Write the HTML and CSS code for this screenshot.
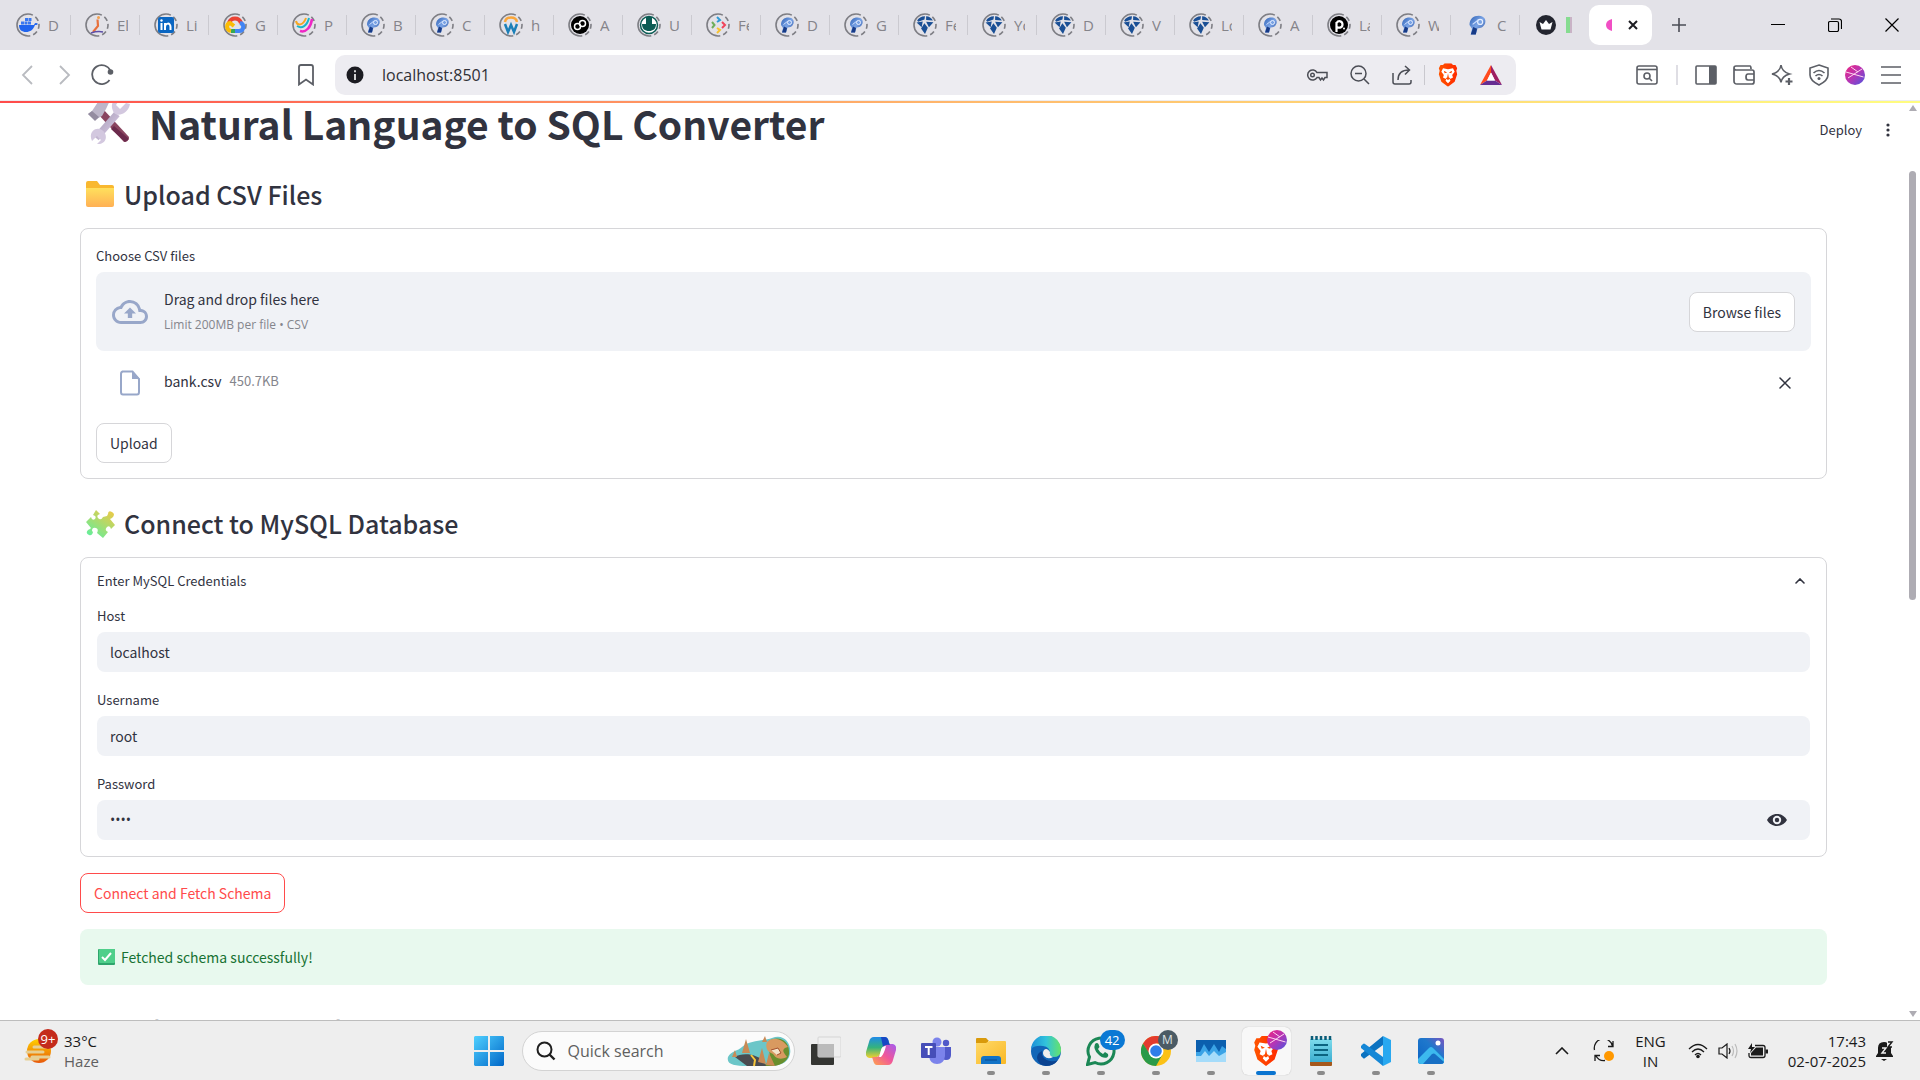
FILE: index.html
```html
<!DOCTYPE html>
<html lang="en">
<head>
<meta charset="utf-8">
<meta name="viewport" content="width=device-width, initial-scale=1">
<title>Natural Language to SQL Converter</title>
<link rel="stylesheet" href="styles.css">
</head>
<body>
<svg class="sprite" aria-hidden="true">
  <defs>
    <linearGradient id="gBlue" x1="0" y1="0" x2="1" y2="1"><stop offset="0" stop-color="#2f62b5"/><stop offset=".5" stop-color="#7ba4e6"/><stop offset="1" stop-color="#2a4f9a"/></linearGradient>
    <linearGradient id="gOrb" x1="0" y1="0" x2="1" y2="1"><stop offset="0" stop-color="#f0257f"/><stop offset=".5" stop-color="#b535b5"/><stop offset="1" stop-color="#4b55e0"/></linearGradient>
    <linearGradient id="gBrave" x1="0" y1="0" x2="1" y2="0"><stop offset="0" stop-color="#ff5500"/><stop offset="1" stop-color="#ff2a00"/></linearGradient>
    <linearGradient id="gWin" x1="0" y1="0" x2="1" y2="1"><stop offset="0" stop-color="#4fd0ff"/><stop offset="1" stop-color="#0067c8"/></linearGradient>
    <linearGradient id="gFolder" x1="0" y1="0" x2="0" y2="1"><stop offset="0" stop-color="#ffe05c"/><stop offset="1" stop-color="#ffb055"/></linearGradient>
    <linearGradient id="gFolder2" x1="0" y1="0" x2="1" y2="1"><stop offset="0" stop-color="#ffd968"/><stop offset="1" stop-color="#f9b825"/></linearGradient>
    <linearGradient id="gPuzzle" gradientUnits="userSpaceOnUse" x1="6" y1="30" x2="24" y2="4"><stop offset="0" stop-color="#62ef9c"/><stop offset="1" stop-color="#e3cc4c"/></linearGradient>
    <linearGradient id="gSun" x1="0" y1="0" x2="0" y2="1"><stop offset="0" stop-color="#ffd100"/><stop offset="1" stop-color="#e8590c"/></linearGradient>
    <linearGradient id="gEdge" x1="0" y1="0" x2="1" y2="0"><stop offset="0" stop-color="#1c8fd8"/><stop offset=".5" stop-color="#31c3dc"/><stop offset="1" stop-color="#66e36a"/></linearGradient>
    <linearGradient id="gCopA" x1="0" y1="0" x2="0" y2="1"><stop offset="0" stop-color="#1f8ae8"/><stop offset=".5" stop-color="#35b37c"/><stop offset="1" stop-color="#f5d12d"/></linearGradient>
    <linearGradient id="gCopB" x1="1" y1="0" x2="0" y2="1"><stop offset="0" stop-color="#a35cf0"/><stop offset=".5" stop-color="#f0569a"/><stop offset="1" stop-color="#ffa54a"/></linearGradient>
    <linearGradient id="gPhoto" x1="0" y1="1" x2="1" y2="0"><stop offset="0" stop-color="#0b63c4"/><stop offset=".6" stop-color="#1f78cc"/><stop offset="1" stop-color="#7a55c0"/></linearGradient>
    <linearGradient id="gNote" x1="0" y1="0" x2="0" y2="1"><stop offset="0" stop-color="#7edcec"/><stop offset="1" stop-color="#3cadd0"/></linearGradient>
    <linearGradient id="gMetal" x1="0" y1="0" x2="1" y2="1"><stop offset="0" stop-color="#a59db3"/><stop offset="1" stop-color="#dccbea"/></linearGradient>
  </defs>
  <symbol id="ring" viewBox="0 0 24 24"><path d="M12 1A11 11 0 0 0 12 23" fill="none" stroke="#7e7e84" stroke-width="1.6"/><path d="M12 1A11 11 0 0 1 12 23" fill="none" stroke="#7e7e84" stroke-width="1.6" stroke-dasharray="5 3"/></symbol>
  <symbol id="p-bird" viewBox="0 0 16 16"><path d="M3 15.500 4 11 2 8C2 3 5 .500 9.500.500c4 0 6 3 5 6S11 10.500 8.500 10.500L7 15.500Z" fill="url(#gBlue)"/><path d="M3 15.500 5 9.500 8 11 7 15.500Z" fill="#173b87"/><circle cx="10.500" cy="5.500" r="2" fill="none" stroke="#e6efff"/><path d="M4.500 7.500 9 4" stroke="#cfe0ff"/></symbol>
  <symbol id="shards" viewBox="0 0 16 16"><path d="M1 4Q3 .500 8 .300L7.500 3 2 5ZM9 .300Q13 .500 15 4L9 3.500ZM.500 5.800 6 4.800 5 10ZM9 5 15.500 5.500 11.500 10ZM7.500 6.500 10.500 10.500 8 16 4.500 11Z" fill="#1a4f95"/></symbol>
  <symbol id="brave" viewBox="0 0 24 28"><path d="M6 2 8 0h8l2 2 3 0 2 4-1 3 1 4-3 9-8 6-8-6-3-9 1-4-1-3 2-4Z" fill="url(#gBrave)"/><path d="m6 6 6 1 6-1 2 4-3 4 1 3-4 2 1 2-3 3-3-3 1-2-4-2 1-3-3-4Z" fill="#fff"/><path d="m7 9 4 2-3 1Zm10 0-4 2 3 1Zm-5 3 1 5 2 1-3 2-3-2 2-1Z" fill="#ff4a00"/></symbol>
  <symbol id="orb" viewBox="0 0 20 20"><circle cx="10" cy="10" r="10" fill="url(#gOrb)"/><path d="M1 7 18.500 12M3 13 17 4M6 2 13 7" stroke="#ffd5ef" stroke-width="1" fill="none"/></symbol>
  <symbol id="folder" viewBox="0 0 30 28"><path d="M1 3q0-2 2-2h9l3 4h12q2 0 2 2v9H1Z" fill="#f9b82f"/><path d="M1 8h28v17q0 2-2 2H3q-2 0-2-2Z" fill="url(#gFolder)"/></symbol>
</svg>

<div class="screen">
  <header class="browser">
    <div class="tabstrip">
      <nav class="tabs" aria-label="Tabs">
        <a class="tab" href="#"><svg class="fav" viewBox="0 0 24 24"><use href="#ring"/><path d="M3 12h15c1-3 3-2 4-1-1 1-2 1-3 1-2 5-5 7-9 7-4 0-7-2-7-7Z" fill="#2064ee"/><path d="M5 8.500h3v3H5Zm3.500 0h3v3h-3Zm3.500 0h3v3h-3Zm-3-3.500h3v3h-3Zm3.500 0h3v3h-3Z" fill="#3a78f0"/></svg><span>D</span></a>
        <a class="tab" href="#"><svg class="fav" viewBox="0 0 24 24"><use href="#ring"/><path d="M12.500 6.500 13 13l-5 6" stroke="#e8703c" stroke-width="2.200" fill="none"/><path d="M6 20c3-1 7-2 12-1" stroke="#5d4fa8" stroke-width="1.500" fill="none"/><circle cx="13.500" cy="4.500" r="1.500" fill="#f3a04d"/></svg><span>El</span></a>
        <a class="tab" href="#"><svg class="fav" viewBox="0 0 24 24"><use href="#ring"/><rect x="4" y="4" width="16" height="16" rx="2" fill="#0a66c2"/><path d="M7.500 10v7M11 17v-7m0 4c0-4 5.500-5 5.500 0v3" stroke="#fff" stroke-width="2" fill="none"/><circle cx="7.500" cy="7.500" r="1.200" fill="#fff"/></svg><span>Li</span></a>
        <a class="tab" href="#"><svg class="fav" viewBox="0 0 24 24"><use href="#ring"/><path d="M6 10c2-6 10-6 12 0" stroke="#ea4335" stroke-width="4" fill="none"/><path d="M17 10c5 1 4 8-1 8h-4" stroke="#4285f4" stroke-width="4" fill="none"/><path d="M12 18H8" stroke="#34a853" stroke-width="4"/><path d="M8 18c-5-1-5-7-1-8l4 3" stroke="#fbbc05" stroke-width="4" fill="none"/></svg><span>G</span></a>
        <a class="tab" href="#"><svg class="fav" viewBox="0 0 24 24"><use href="#ring"/><path d="M4 8c1 5 7 5 10-3" stroke="#f5a623" stroke-width="2" fill="none"/><path d="M5 13c5 3 10 0 12-8" stroke="#19b5c9" stroke-width="2" fill="none"/><path d="M8 18c6 2 11-4 12-12" stroke="#ef27c5" stroke-width="2.500" fill="none"/></svg><span>P</span></a>
        <a class="tab" href="#"><svg class="fav" viewBox="0 0 24 24"><use href="#ring"/><use href="#p-bird" x="4" y="4" width="16" height="16"/></svg><span>B</span></a>
        <a class="tab" href="#"><svg class="fav" viewBox="0 0 24 24"><use href="#ring"/><use href="#p-bird" x="4" y="4" width="16" height="16"/></svg><span>C</span></a>
        <a class="tab" href="#"><svg class="fav" viewBox="0 0 24 24"><use href="#ring"/><path d="M6 9c1-6 11-6 12 0" stroke="#f9a63a" stroke-width="2.500" fill="none"/><path d="m6 11 3 8 3-7 3 7 3-8" stroke="#1b7fb8" stroke-width="2.500" fill="none"/></svg><span>h</span></a>
        <a class="tab" href="#"><svg class="fav" viewBox="0 0 24 24"><use href="#ring"/><circle cx="12" cy="12" r="9" fill="#000"/><circle cx="9.500" cy="13.500" r="3" fill="none" stroke="#fff" stroke-width="1.500"/><circle cx="14.500" cy="10.500" r="3" fill="none" stroke="#fff" stroke-width="1.500"/></svg><span>A</span></a>
        <a class="tab" href="#"><svg class="fav" viewBox="0 0 24 24"><use href="#ring"/><circle cx="12" cy="12" r="8.500" fill="#fff" stroke="#0b5c54" stroke-width="1.500"/><path d="M9 4h6v7h4c0 5-3 7-7 7s-7-2-7-7h4Z" fill="#0b5c54"/></svg><span>U</span></a>
        <a class="tab" href="#"><svg class="fav" viewBox="0 0 24 24"><use href="#ring"/><path d="m6 9 2.500 3L6 15" stroke="#6fae5a" stroke-width="2" fill="none"/><path d="m11 4 3 3-3 2" stroke="#2f9bd6" stroke-width="2" fill="none"/><path d="m16 9 3 3-3 3" stroke="#f0445a" stroke-width="2" fill="none"/><path d="m11 15 3 2-3 3" stroke="#f7c22f" stroke-width="2" fill="none"/></svg><span>Fe</span></a>
        <a class="tab" href="#"><svg class="fav" viewBox="0 0 24 24"><use href="#ring"/><use href="#p-bird" x="4" y="4" width="16" height="16"/></svg><span>D</span></a>
        <a class="tab" href="#"><svg class="fav" viewBox="0 0 24 24"><use href="#ring"/><use href="#p-bird" x="4" y="4" width="16" height="16"/></svg><span>G</span></a>
        <a class="tab" href="#"><svg class="fav" viewBox="0 0 24 24"><use href="#ring"/><use href="#shards" x="3" y="3" width="18" height="18"/></svg><span>Fe</span></a>
        <a class="tab" href="#"><svg class="fav" viewBox="0 0 24 24"><use href="#ring"/><use href="#shards" x="3" y="3" width="18" height="18"/></svg><span>Yo</span></a>
        <a class="tab" href="#"><svg class="fav" viewBox="0 0 24 24"><use href="#ring"/><use href="#shards" x="3" y="3" width="18" height="18"/></svg><span>D</span></a>
        <a class="tab" href="#"><svg class="fav" viewBox="0 0 24 24"><use href="#ring"/><use href="#shards" x="3" y="3" width="18" height="18"/></svg><span>V</span></a>
        <a class="tab" href="#"><svg class="fav" viewBox="0 0 24 24"><use href="#ring"/><use href="#shards" x="3" y="3" width="18" height="18"/></svg><span>Lo</span></a>
        <a class="tab" href="#"><svg class="fav" viewBox="0 0 24 24"><use href="#ring"/><use href="#p-bird" x="4" y="4" width="16" height="16"/></svg><span>A</span></a>
        <a class="tab" href="#"><svg class="fav" viewBox="0 0 24 24"><use href="#ring"/><circle cx="12" cy="12" r="9" fill="#000"/><path d="M9.500 19V9M9.500 10c2-3 6-2 6 1.500s-4 4-6 2" stroke="#fff" stroke-width="2.200" fill="none"/><circle cx="17" cy="15.500" r="1" fill="#fff"/></svg><span>La</span></a>
        <a class="tab" href="#"><svg class="fav" viewBox="0 0 24 24"><use href="#ring"/><use href="#p-bird" x="4" y="4" width="16" height="16"/></svg><span>W</span></a>
        <a class="tab" href="#"><svg class="fav" viewBox="0 0 24 24"><use href="#p-bird" x="2" y="2" width="20" height="20"/></svg><span>C</span></a>
        <a class="tab last" href="#"><svg class="fav" viewBox="0 0 24 24"><circle cx="12" cy="12" r="10" fill="#23252f"/><path d="m5.500 9 3.500 2 3-4 3 4 3.500-2-2 7.500h-9Z" fill="#fff"/></svg><span class="chip"></span></a>
        <a class="tab active" href="#" aria-current="page"><svg width="8" height="12" viewBox="0 0 8 12"><path d="M7 0C3 1 1 3 1 6s2 5 6 6Z" fill="#f14fc4"/></svg><svg width="12" height="12" viewBox="0 0 12 12"><path d="m2 2 8 8M10 2l-8 8" stroke="#1d1d22" stroke-width="2"/></svg></a>
      </nav>
      <button class="bare newtab" aria-label="New tab"><svg width="14" height="14" viewBox="0 0 14 14"><path d="M7 0v14M0 7h14" stroke="#4b4d55" stroke-width="1.600"/></svg></button>
      <div class="winctl">
        <button class="bare" aria-label="Minimise"><svg width="14" height="14" viewBox="0 0 14 14"><path d="M0 6.500h14" stroke="#000"/></svg></button>
        <button class="bare" aria-label="Restore"><svg width="14" height="14" viewBox="0 0 14 14"><rect x=".500" y="3.500" width="10" height="10" rx="1.500" fill="none" stroke="#000" stroke-width="1.200"/><path d="M3 1h8q2.500 0 2.500 2.500V11" fill="none" stroke="#000" stroke-width="1.200"/></svg></button>
        <button class="bare" aria-label="Close"><svg width="14" height="14" viewBox="0 0 14 14"><path d="m.500.500 13 13m0-13-13 13" stroke="#000" stroke-width="1.200"/></svg></button>
      </div>
    </div>

    <div class="toolbar">
      <div class="nav">
        <button class="bare" aria-label="Back"><svg width="12" height="20" viewBox="0 0 12 20"><path d="M11 1 2 10l9 9" fill="none" stroke="#b9bbc0" stroke-width="1.800"/></svg></button>
        <button class="bare" aria-label="Forward"><svg width="12" height="20" viewBox="0 0 12 20"><path d="m1 1 9 9-9 9" fill="none" stroke="#b9bbc0" stroke-width="1.800"/></svg></button>
        <button class="bare" aria-label="Reload"><svg width="24" height="22" viewBox="0 0 24 22"><path d="M18.500 16A9.500 9.500 0 1 1 19.500 7" fill="none" stroke="#5c5f66" stroke-width="1.800"/><circle cx="19.500" cy="8" r="2.800" fill="#5c5f66"/></svg></button>
      </div>
      <button class="bare bookmark" aria-label="Bookmark"><svg width="18" height="22" viewBox="0 0 18 22"><path d="M2 20.500V3q0-2 2-2h10q2 0 2 2v17.500l-7-5Z" fill="none" stroke="#5c5f66" stroke-width="1.800"/></svg></button>
      <div class="address">
        <svg width="18" height="18" viewBox="0 0 18 18"><circle cx="9" cy="9" r="8.500" fill="#1c1c22"/><path d="M9 8v6M9 4.200v2" stroke="#fff" stroke-width="1.600"/></svg>
        <input class="url" type="text" value="localhost:8501" aria-label="Address">
        <button class="bare" aria-label="Passwords"><svg width="22" height="16" viewBox="0 0 22 16"><path d="M11 5.500A5 5 0 1 0 11 10.500h2l1.500 2.500 1.500-2 1.500 2 1.500-2.500H21v-5Z" fill="none" stroke="#4b4d55" stroke-width="1.500"/><circle cx="6.500" cy="8" r="1.800" fill="none" stroke="#4b4d55" stroke-width="1.400"/></svg></button>
        <button class="bare" aria-label="Zoom"><svg width="20" height="20" viewBox="0 0 20 20"><circle cx="8.500" cy="8.500" r="7.500" fill="none" stroke="#4b4d55" stroke-width="1.500"/><path d="m14 14 5 5M5 8.500h7" stroke="#4b4d55" stroke-width="1.500"/></svg></button>
        <button class="bare" aria-label="Share"><svg width="20" height="20" viewBox="0 0 20 20"><path d="M1 8v9q0 2 2 2h14q2 0 2-2v-2M6 15C6 8 10 5 17 5M13 1l4.500 4-4.500 4.500" fill="none" stroke="#4b4d55" stroke-width="1.500"/></svg></button>
        <span class="rule"></span>
        <button class="bare" aria-label="Shields"><svg width="20" height="24" viewBox="0 0 24 28"><use href="#brave"/></svg></button>
        <button class="bare" aria-label="Rewards"><svg width="22" height="20" viewBox="0 0 22 20"><path d="M11 0 0 20l7-4.500 4-8Z" fill="#ff4a1e"/><path d="m11 0 11 20-7-4.500-4-8Z" fill="#9e1f63"/><path d="M0 20h22l-7-4.500H7Z" fill="#662d91"/><path d="m11 7.500 4 8H7Z" fill="#fff"/></svg></button>
      </div>
      <div class="tools">
        <button class="bare" aria-label="Search tabs"><svg width="22" height="20" viewBox="0 0 22 20"><rect x="1" y="1" width="20" height="18" rx="2" fill="none" stroke="#5c5f66" stroke-width="1.600"/><path d="M1 4.500h20" stroke="#5c5f66" stroke-width="1.600"/><circle cx="11" cy="11" r="3" fill="none" stroke="#5c5f66" stroke-width="1.600"/><path d="m13 13 3 3" stroke="#5c5f66" stroke-width="1.600"/></svg></button>
        <span class="rule thick"></span>
        <button class="bare" aria-label="Sidebar"><svg width="22" height="20" viewBox="0 0 22 20"><rect x="1" y="1" width="20" height="18" rx="1" fill="none" stroke="#5c5f66" stroke-width="1.600"/><path d="M14 1h7v18h-7Z" fill="#5c5f66"/></svg></button>
        <button class="bare" aria-label="Wallet"><svg width="22" height="20" viewBox="0 0 22 20"><path d="M1 3q0-2 2-2h14q1 0 1 3M1 3q0 2 2 2h16q2 0 2 2v10q0 2-2 2H4q-3 0-3-3ZM21 9h-6q-2 0-2 3t2 3h6" fill="none" stroke="#5c5f66" stroke-width="1.700"/></svg></button>
        <button class="bare" aria-label="Assistant"><svg width="22" height="22" viewBox="0 0 22 22"><path d="M10 1q1 7 8.500 9-7.500 2-8.500 8.500Q9 12 1 10 9 8 10 1Z" fill="none" stroke="#5c5f66" stroke-width="1.600"/><path d="M18 14v7m-3.500-3.500h7" stroke="#5c5f66" stroke-width="2.200"/></svg></button>
        <button class="bare" aria-label="VPN"><svg width="20" height="22" viewBox="0 0 20 22"><path d="m10 1 9 3v7c0 5-5 8-9 10-4-2-9-5-9-10V4Z" fill="none" stroke="#5c5f66" stroke-width="1.600"/><path d="M4.500 9q5.500-5 11 0M6.500 12q3.500-3 7 0" fill="none" stroke="#5c5f66" stroke-width="1.600"/><circle cx="10" cy="14.500" r="1.500" fill="#5c5f66"/></svg></button>
        <button class="bare" aria-label="Profile"><svg width="20" height="20"><use href="#orb"/></svg></button>
        <button class="bare" aria-label="Menu"><svg width="20" height="18" viewBox="0 0 20 18"><path d="M0 1h20M0 9h20M0 17h20" stroke="#5c5f66" stroke-width="1.600"/></svg></button>
      </div>
    </div>
    <div class="rainbow"></div>
  </header>

  <div class="viewport">
    <main class="app">
      <h1><svg width="52" height="48" viewBox="0 0 52 48"><path d="m14 14 6-4 26 28q0 5-5 5Z" fill="#8a4560"/><path d="m31 27 15 13-4 3-14-13Z" fill="#6b2a4c"/><path d="m5 15 4-3 8-12 12-3-6 13-4 7-7 4Z" fill="#bdb6c9"/><path d="m5 15 4-3 7 6-4 4Z" fill="#948ca0"/><path d="m13 39 21-24" stroke="url(#gMetal)" stroke-width="7"/><path d="M43 4 37 10l-4-4 4-6c-7 0-10 5-7 12 2 7 15 4 17-7ZM9 42l5-5 4 4-4 4c9 1 12-9 5-14-7-4-14 3-10 11Z" fill="#d3c8df"/></svg>Natural Language to SQL Converter</h1>

      <h2><svg width="32" height="28" viewBox="0 0 30 28"><use href="#folder"/></svg>Upload CSV Files</h2>
      <form class="card">
        <label class="label" for="browse">Choose CSV files</label>
        <div class="drop">
          <svg width="36" height="36" viewBox="0 0 24 24" fill="#98a7c9"><path d="M19.350 10.040A7.490 7.490 0 0 0 12 4C9.110 4 6.600 5.640 5.350 8.040A5.994 5.994 0 0 0 0 14c0 3.310 2.690 6 6 6h13c2.760 0 5-2.240 5-5 0-2.640-2.050-4.780-4.650-4.960ZM19 18H6c-2.210 0-4-1.790-4-4 0-2.050 1.530-3.760 3.560-3.970l1.070-.110.500-.950A5.469 5.469 0 0 1 12 6c2.620 0 4.880 1.860 5.390 4.430l.300 1.500 1.530.110A2.980 2.980 0 0 1 22 15c0 1.650-1.350 3-3 3Z"/><path d="M8 13h2.550v3h2.900v-3H16l-4-4Z"/></svg>
          <div class="hint"><span>Drag and drop files here</span><small>Limit 200MB per file • CSV</small></div>
          <button class="btn" type="button" id="browse">Browse files</button>
        </div>
        <div class="file">
          <svg width="36" height="26" viewBox="0 0 36 26"><path d="M10 1.500h10.500L27 9v13q0 2.500-2 2.500H11q-2 0-2-2.500V4q0-2.500 2-2.500Z" fill="none" stroke="#98a7c9" stroke-width="2"/><path d="M20 1v8h8Z" fill="#98a7c9"/></svg>
          <span class="name">bank.csv</span><small>450.7KB</small>
          <button class="bare" type="button" aria-label="Remove bank.csv"><svg width="12" height="12" viewBox="0 0 12 12"><path d="m1 1 10 10M11 1 1 11" stroke="#31333f" stroke-width="1.500" stroke-linecap="round"/></svg></button>
        </div>
        <button class="btn" type="button">Upload</button>
      </form>

      <h2><svg width="32" height="32" viewBox="0 0 32 32"><g fill="url(#gPuzzle)"><path d="M12 3 16 7q-4 1-2 4 3 3 5-1l4-1 1-2q0-4 4-2t0 6l-2 1 5 6-4 4q-1-4-4-2-3 3 1 5l-5 6-6-5q2-4-1-5-4-1-4 3l1 1q-1 4-4 3-4-2-1-5l2-1 1-1-5-6 5-5q1 4 4 2 2-3-2-4Z"/></g></svg>Connect to MySQL Database</h2>
      <details class="card" open>
        <summary>Enter MySQL Credentials<svg width="10" height="6" viewBox="0 0 10 6"><path d="m1 5 4-4 4 4" fill="none" stroke="#31333f" stroke-width="1.600" stroke-linecap="round"/></svg></summary>
        <div class="fields">
          <div><label class="label" for="host">Host</label><input class="box" id="host" type="text" value="localhost"></div>
          <div><label class="label" for="user">Username</label><input class="box" id="user" type="text" value="root"></div>
          <div><label class="label" for="pass">Password</label>
            <div class="box secret"><input id="pass" type="password" value="root"><button class="bare" type="button" aria-label="Show password"><svg width="20" height="14" viewBox="0 0 20 14"><path d="M10 1C5.500 1 2 3.500 0 7c2 3.500 5.500 6 10 6s8-2.500 10-6c-2-3.500-5.500-6-10-6Z" fill="#31333f"/><circle cx="10" cy="7" r="3.200" fill="none" stroke="#f0f2f6" stroke-width="2"/></svg></button></div>
          </div>
        </div>
      </details>
      <button class="btn primary" type="button">Connect and Fetch Schema</button>
      <div class="alert" role="status"><svg width="17" height="16" viewBox="0 0 17 16"><rect width="17" height="16" rx="1" fill="#2fa56c"/><rect x="1" width="16" height="14" rx="1" fill="#4fcf8a"/><path d="m4 8 3 3 6-7" fill="none" stroke="#fff" stroke-width="2"/></svg>Fetched schema successfully!</div>
      <h2><svg width="32" height="20" viewBox="0 0 32 20"><path d="M3 3q0-2 2-2h9l3 3h11q2 0 2 2v12H3Z" fill="#f9b82f"/><path d="M6 10h25l-3 10H3Z" fill="url(#gFolder)"/></svg>Select MySQL Table</h2>
    </main>
    <div class="appbar"><button class="bare">Deploy</button><button class="bare" aria-label="More options"><svg width="4" height="14" viewBox="0 0 4 14" fill="#31333f"><circle cx="2" cy="2" r="1.600"/><circle cx="2" cy="7" r="1.600"/><circle cx="2" cy="12" r="1.600"/></svg></button></div>
    <div class="scroll" aria-hidden="true">
      <svg width="8" height="6" viewBox="0 0 8 6"><path d="M4 0 8 6H0Z" fill="#aeacb3"/></svg>
      <div class="track"><div class="thumb"></div></div>
      <svg width="8" height="6" viewBox="0 0 8 6"><path d="M4 6 8 0H0Z" fill="#aeacb3"/></svg>
    </div>
  </div>

  <footer class="taskbar">
    <div class="weather">
      <div class="app-ic"><svg width="28" height="28" viewBox="0 0 28 28"><circle cx="15" cy="14" r="12" fill="url(#gSun)"/><path d="M3 15h16M8 20h17M2 22h12M10 10h12" stroke="#e6cf94" stroke-width="3" stroke-linecap="round"/></svg><span class="badge red">9+</span></div>
      <div class="lines"><span>33°C</span><span class="dim">Haze</span></div>
    </div>
    <nav class="dock" aria-label="Taskbar">
      <button class="item" aria-label="Start"><svg width="30" height="30" viewBox="0 0 30 30"><path d="M1 0h13v14H0V1Zm15 0h13l1 1v13H16ZM0 16h14v14H1l-1-1Zm16 0h14v13l-1 1H16Z" fill="url(#gWin)"/></svg></button>
      <label class="search"><svg width="20" height="20" viewBox="0 0 20 20"><circle cx="8.500" cy="8.500" r="7" fill="none" stroke="#1f1f1f" stroke-width="2"/><path d="m13.500 13.500 5 5" stroke="#1f1f1f" stroke-width="2.400"/></svg><input type="text" placeholder="Quick search" aria-label="Quick search"><svg class="art" width="64" height="32" viewBox="0 0 64 32"><path d="M1 22c3-6 10-6 14-10 8-7 22-6 30-9 12-5 20 6 18 16-2 10-12 12-22 12H20C8 31-1 30 1 22Z" fill="#6cc6c8"/><path d="M42 6c10-6 20 0 20 10 1 9-7 14-15 15H36c12-6 4-15 6-25Z" fill="#6a8f2d"/><path d="M40 7c8-7 17-1 21 5-8 2-4 6-1 10-8 4-12 0-14-3-6-2-8-7-6-12Z" fill="#d99a60"/><path d="M8 22c7-5 26-4 31 9H20Z" fill="#4a4b50"/><path d="m24 20 4 5-1 6" fill="none" stroke="#f6c53a" stroke-width="2"/><path d="m15 18 4-14 4 14ZM31 27l4-14 4 16ZM39 30l3-12 6 13ZM5 22l3-7 2 7ZM35 7l3-6 2 6Z" fill="#c98a55"/><path d="m44 15 7-2 3 5-4 2" fill="#f4e3c8" stroke="#a5502c"/></svg></label>
      <button class="item" aria-label="Task view"><svg width="30" height="30" viewBox="0 0 30 30"><rect x="0" y="8" width="23" height="21" rx="1" fill="#343532"/><rect x="7" y="1" width="23" height="20" rx="1" fill="#eee" fill-opacity=".850" stroke="#d5d5d5"/><path d="M7 8h16v13H7Z" fill="#bbb"/></svg></button>
      <button class="item" aria-label="Copilot"><svg width="30" height="28" viewBox="0 0 30 28"><path d="M8 0h11q3 0 4 5l1 4h-4q-4 0-5 5-1 7-8 7H3q-4-1-3-6L3 5q1-5 5-5Z" fill="url(#gCopA)"/><path d="M22 28H11q-3 0-4-5l-1-3h4q4 0 5-6 2-7 8-7h4q4 1 3 6l-3 10q-1 5-5 5Z" fill="url(#gCopB)"/><path d="M15 0h4q3 0 4 6l1 2q-5-1-7 2Z" fill="#1748c4"/><path d="M15 20q3-3 5-11-4 0-5 4l-2 7Z" fill="#fff"/></svg></button>
      <button class="item" aria-label="Teams"><svg width="30" height="28" viewBox="0 0 30 28"><circle cx="16" cy="5" r="4.500" fill="#7b83eb"/><circle cx="25" cy="6" r="3.200" fill="#5059c9"/><path d="M19 10h11v8q0 5-5 5-4 0-6-3Z" fill="#5059c9"/><path d="M8 10h16v9q-1 8-8 8t-8-8Z" fill="#7b83eb"/><rect y="6" width="15" height="15" rx="1" fill="#464eb8"/><path d="M4 10h7.500M7.700 10v8" stroke="#fff" stroke-width="2"/></svg></button>
      <button class="item run" aria-label="File Explorer"><svg width="30" height="28" viewBox="0 0 30 28"><path d="M0 2q0-1 1-1h9l3 3h-1v3H0Z" fill="#d99a0b"/><path d="M0 6h10l3-2h16q1 0 1 1v21q0 1-1 1H0Z" fill="url(#gFolder2)"/><path d="M5 27v-5q0-3 3-3h14q3 0 3 3v5Z" fill="#1173c7"/><path d="M9 23h12" stroke="#0a4a8c"/></svg></button>
      <button class="item run" aria-label="Edge"><svg width="30" height="30" viewBox="0 0 30 30"><circle cx="15" cy="15" r="15" fill="#1166b8"/><path d="M0 13A15 15 0 0 1 30 15q-1 6-7 6-5 0-4-4 0-6-7-7-8-1-12 3Z" fill="url(#gEdge)"/><path d="M11 15q-1 8 8 10 5 1 8-1-4 6-12 6-8-1-9-8 0-5 5-7Z" fill="#0a4290"/><path d="M13 14q3-3 6 2-1 4 3 5-5 3-9-1-2-3 0-6Z" fill="#eee"/></svg></button>
      <button class="item run" aria-label="WhatsApp"><svg width="30" height="30" viewBox="0 0 30 30"><path d="m1.500 28.500 2-7.500A13 13 0 1 1 9 26.500Z" fill="none" stroke="#1b8755" stroke-width="3"/><path d="M9 8q2-2 3.500 0l1 3-1.500 2q2 4 5 5l2-2 3 2q1 2-1 3.500Q17 23 12 18 7 13 9 8Z" fill="#1b8755"/></svg><span class="badge blue">42</span></button>
      <button class="item run" aria-label="Chrome"><svg width="30" height="30" viewBox="0 0 30 30"><circle cx="15" cy="15" r="15" fill="#fbc116"/><path d="M2 7.500A15 15 0 0 1 28 7.500H15L8.500 19Z" fill="#e33b2e"/><path d="M2 7.500A15 15 0 0 0 15 30l6.500-11.500H9Z" fill="#2a9a48"/><circle cx="15" cy="15" r="7.500" fill="#fff"/><circle cx="15" cy="15" r="5.800" fill="#2f7de9"/></svg><span class="badge slate">M</span></button>
      <button class="item run" aria-label="Task Manager"><svg width="30" height="24" viewBox="0 0 30 24"><path d="M0 1h30v22H0Z" fill="#0b5fae"/><path d="M0 13h4l4-8 5 8 5-8 5 8 3-6 4 3v13H0Z" fill="#3aa3e6"/><path d="m0 17 5 0 4-5 4 5 5-5 5 5 7-4v10H0Z" fill="#a5dcfa"/></svg></button>
      <button class="item run current" aria-label="Brave"><svg width="26" height="30" viewBox="0 0 24 28"><use href="#brave"/></svg><span class="badge orb"><svg width="20" height="20"><use href="#orb"/></svg></span></button>
      <button class="item run" aria-label="Notepad"><svg width="24" height="30" viewBox="0 0 24 30"><path d="M1 26h22v3q0 1-1 1H2q-1 0-1-1Z" fill="#a5581c"/><path d="M1 3h22v23H1Z" fill="url(#gNote)"/><path d="M3 0v4M7.500 0v4M12 0v4m4.500-4v4M21 0v4" stroke="#0b5c78" stroke-width="2.500"/><path d="M5 9h14M5 14h14M5 19h14" stroke="#0b6480" stroke-width="2"/></svg></button>
      <button class="item run" aria-label="Visual Studio Code"><svg width="30" height="30" viewBox="0 0 30 30"><path d="m22 0 8 4v22l-8 4Z" fill="#28a8f0"/><path d="m22 0v9L4 22q-1 1-2 0l-2-2v-2Z" fill="#0b72c0"/><path d="M22 30v-9L4 8Q3 7 2 8l-2 2v2Z" fill="#1587d6"/></svg></button>
      <button class="item run" aria-label="Photos"><svg width="26" height="26" viewBox="0 0 26 26"><rect width="26" height="26" rx="3" fill="url(#gPhoto)"/><path d="M0 21 11 10q2-2 4 0l11 11v2q0 3-3 3H3q-3 0-3-3Z" fill="#3cb9ee"/><path d="m5 26 9-10q2-1 3 0l9 8q-1 2-3 2Z" fill="#176fc4"/><circle cx="20" cy="5" r="2.500" fill="#fff"/></svg></button>
    </nav>
    <div class="tray">
      <button class="bare" aria-label="Hidden icons"><svg width="14" height="8" viewBox="0 0 14 8"><path d="m1 7 6-6 6 6" fill="none" stroke="#1a1a1a" stroke-width="1.600"/></svg></button>
      <button class="bare" aria-label="Updates"><svg width="22" height="22" viewBox="0 0 22 22"><path d="M1.500 10A9 9 0 0 1 19.500 6M20 1v5.500h-5M12 20.500A9 9 0 0 1 3 16M2 21v-5.500h5" fill="none" stroke="#1a1a1a" stroke-width="1.300"/><circle cx="16" cy="16" r="5" fill="#ff9800"/></svg></button>
      <div class="lines mid"><span>ENG</span><span>IN</span></div>
      <div class="status">
        <svg width="20" height="16" viewBox="0 0 20 16"><path d="M1 6q9-9 18 0M4 9q6-6 12 0M7 12q3-3 6 0" fill="none" stroke="#1a1a1a" stroke-width="1.300"/><circle cx="10" cy="13.500" r="1.800" fill="#1a1a1a"/></svg>
        <svg width="20" height="16" viewBox="0 0 20 16"><path d="M1 5h3l5-4v14l-5-4H1Z" fill="none" stroke="#1a1a1a" stroke-width="1.200"/><path d="M11 5q2 3 0 6" fill="none" stroke="#1a1a1a" stroke-width="1.200"/><path d="M14 3q3 5 0 10M17 1q4 7 0 14" fill="none" stroke="#bbb" stroke-width="1.200"/></svg>
        <svg width="20" height="16" viewBox="0 0 20 16"><path d="M7 2.500h8q2 0 2 2v8q0 2-2 2H3q-2 0-2-2V10" fill="none" stroke="#1a1a1a" stroke-width="1.300"/><path d="M8 4.500h7v8H3V10ZM17.500 6.500H20v4h-2.500ZM4 0 0 6h3L2 10l5-6H4Z" fill="#1a1a1a"/></svg>
      </div>
      <div class="lines end"><span>17:43</span><span>02-07-2025</span></div>
      <svg width="18" height="20" viewBox="0 0 18 20"><path d="M0 15 2 12V7q0-6 6-6 3 0 3 1v4h4v6l2 3v1H0Zm5 3h6l-3 2Z" fill="#1a1a1a"/><path d="M12 1h4l-4 5h4" fill="none" stroke="#1a1a1a" stroke-width="1.400"/><path d="M6 7h4l-4 5h4" fill="none" stroke="#eee" stroke-width="1.400"/></svg>
    </div>
  </footer>
</div>
</body>
</html>
```
FILE: styles.css
```css
* { box-sizing: border-box; }

body {
  margin: 0;
  background: #fff;
  color: #31333f;
  font-family: "Noto Sans CJK SC", "Noto Sans", sans-serif;
  font-size: 14px;
  line-height: 24px;
}

button, input { font: inherit; color: inherit; margin: 0; }
input { border: 0; background: none; outline: 0; padding: 0; min-width: 0; }
svg { display: block; flex: none; }
a { color: inherit; text-decoration: none; }

.sprite { position: absolute; width: 0; height: 0; }

.bare {
  display: grid;
  place-items: center;
  padding: 0;
  border: 0;
  background: none;
}

.screen { display: flex; flex-direction: column; height: 100vh; overflow: hidden; }

/* Browser chrome */
.browser { flex: none; font-family: "Open Sans", "Noto Sans", sans-serif; }

.tabstrip { display: flex; align-items: center; height: 50px; background: #e3e2e8; padding-left: 2px; }
.tabs { display: flex; align-items: center; min-width: 0; }
.tab {
  display: flex;
  align-items: center;
  gap: 8px;
  width: 69px;
  height: 40px;
  padding: 0 11px 0 14px;
  overflow: hidden;
  color: #85848a;
  font-size: 15px;
  background: linear-gradient(#cbcad0, #cbcad0) right center / 1px 20px no-repeat;
}
.tab span { overflow: hidden; width: 11px; white-space: nowrap; }
.tab.last { background: none; }
.tab .chip { height: 16px; width: 6px; background: linear-gradient(90deg, #86dc90 60%, #c9b3c6 60%); }
.tab.active { width: 63px; gap: 14px; padding: 0 0 0 16px; background: #fff; border-radius: 10px; }
.fav { width: 24px; height: 24px; }
.newtab { width: 54px; height: 40px; }
.winctl { display: flex; margin-left: auto; }
.winctl .bare { width: 57px; height: 40px; }

.toolbar { display: flex; align-items: center; height: 51px; border-bottom: 1px solid #ededf1; }
.nav { display: flex; gap: 26px; padding-left: 21px; width: 297px; }
.nav .bare:last-child { margin-left: -6px; }
.address {
  display: flex;
  align-items: center;
  flex: 1;
  gap: 22px;
  height: 40px;
  margin: 0 120px 0 20px;
  padding: 0 14px 0 11px;
  border-radius: 10px;
  background: #edecf1;
}
.address .url { flex: 1; height: 24px; margin-left: -4px; font-size: 16px; color: #303036; }
.rule { width: 1px; height: 20px; background: #c9c8ce; margin: 0 -9px 0 -10px; }
.tools { display: flex; align-items: center; gap: 16px; padding-right: 19px; }
.rule.thick { width: 2px; margin: 0 1px 0 2px; background: #dfdee4; }
.rainbow { height: 2px; background: linear-gradient(90deg, #ff4b4b, #ffb86c 50%, #fffd80); }

/* Page */
.viewport { position: relative; display: flex; flex: 1; min-height: 0; overflow: hidden; }
.app { display: flex; flex-direction: column; align-items: stretch; flex: 1; min-width: 0; padding: 0 78px 0 80px; }
.app > * { flex: none; }

h1 { display: flex; align-items: center; gap: 14px; height: 40px; margin: 0 0 35px; padding-left: 3px; font-size: 39px; line-height: 40px; font-weight: 700; }
h2 { display: flex; align-items: center; gap: 8px; height: 32px; margin: 0 0 18px; padding-left: 4px; font-size: 25px; line-height: 32px; font-weight: 500; }

.card { margin: 0 0 28px; border: 1px solid #d6d6d9; border-radius: 8px; }
form.card { padding: 15px; }
.label { display: block; margin-bottom: 4px; font-size: 13px; line-height: 24px; }
small { font-size: 13px; color: #84858c; }

.drop { display: flex; align-items: center; gap: 16px; height: 79px; padding: 0 16px; border-radius: 8px; background: #f0f2f6; }
.hint { display: flex; flex-direction: column; flex: 1; gap: 2px; }
.hint small { font-family: "Open Sans", "Noto Sans", sans-serif; font-size: 12px; }
.file { display: flex; align-items: center; gap: 8px; height: 40px; margin: 12px 0 20px; padding: 0 20px 0 16px; }
.file .name { margin-left: 8px; }
.file .name, .file small { padding-bottom: 4px; }
.file .bare { margin-left: auto; }

.btn { height: 40px; padding: 0 13px; border: 1px solid #d6d6d9; border-radius: 8px; background: #fff; }
.btn.primary { align-self: flex-start; margin-bottom: 16px; border-color: #ff4b4b; color: #ff4b4b; }

details.card { margin-bottom: 16px; padding: 0 16px 16px; }
summary { display: flex; align-items: center; justify-content: space-between; height: 46px; padding-right: 5px; font-size: 13px; list-style: none; }
.fields { display: flex; flex-direction: column; gap: 16px; }
.box { display: block; width: 100%; height: 40px; padding: 0 13px; border-radius: 8px; background: #f0f2f6; }
.secret { display: flex; align-items: center; padding-right: 23px; }
.secret input { flex: 1; font-family: "Open Sans", "Noto Sans", sans-serif; }

.alert { display: flex; align-items: center; gap: 6px; height: 56px; margin-bottom: 28px; padding: 0 18px; border-radius: 8px; background: #e8f9ee; color: #177233; }

.appbar { position: absolute; top: 15px; right: 30px; display: flex; align-items: center; gap: 24px; font-size: 13px; }

.scroll { display: flex; flex-direction: column; align-items: center; width: 15px; padding: 2px 0 3px; }
.track { flex: 1; width: 8px; padding: 60px 0; }
.thumb { height: 55%; width: 7px; border-radius: 4px; background: #aeacb3; }

/* Taskbar */
.taskbar {
  position: relative;
  display: flex;
  align-items: center;
  justify-content: space-between;
  flex: none;
  height: 60px;
  border-top: 1px solid #bdbdbd;
  background: #eee;
  color: #1a1a1a;
  font-family: "Open Sans", "Noto Sans", sans-serif;
  font-size: 15px;
  line-height: 20px;
}
.weather { display: flex; align-items: center; gap: 12px; padding-left: 24px; width: 462px; }
.app-ic { position: relative; }
.lines { display: flex; flex-direction: column; }
.dim { color: #5f5f5f; }
.mid { align-items: center; }
.end { align-items: flex-end; }

.dock { display: flex; align-items: center; }
.item {
  position: relative;
  display: grid;
  place-items: center;
  width: 55px;
  height: 48px;
  padding: 0;
  border: 0;
  background: none;
}
.item.run::after { content: ""; position: absolute; bottom: 0; width: 8px; height: 4px; border-radius: 2px; background: #8a8a8a; }
.item.current { width: 49px; margin: 0 3px; border-radius: 6px; background: #f8f8f8; box-shadow: 0 0 1px #aaa; }
.item.current::after { width: 20px; background: #0a74d0; }
.badge {
  position: absolute;
  top: 3px;
  right: 4px;
  min-width: 20px;
  height: 20px;
  padding: 0 5px;
  border-radius: 10px;
  color: #fff;
  font-size: 13px;
  line-height: 20px;
  text-align: center;
}
.badge.red { top: -8px; right: -6px; padding: 0 1px; background: #c42b1c; }
.badge.blue { background: #0a78d4; }
.badge.slate { right: 6px; background: #4b5b65; padding: 0 3px; font-size: 12px; color: #dde3e6; }
.badge.orb { padding: 0; }

.search { display: flex; align-items: center; gap: 12px; width: 273px; height: 40px; margin: 0 4px 0 5px; padding: 0 3px 0 13px; border: 1px solid #d3d3d3; border-radius: 20px; background: #fbfbfb; }
.search input { flex: 1; width: 0; font-size: 16px; }
.search input::placeholder { color: #5f5f5f; opacity: 1; }

.tray { display: flex; align-items: center; justify-content: flex-end; gap: 24px; width: 462px; padding-right: 26px; }
.status { display: flex; gap: 10px; }
.tray .mid { margin: 0 -2px 0 -4px; }
.tray .end { margin: 0 -14px 0 -4px; }
```
